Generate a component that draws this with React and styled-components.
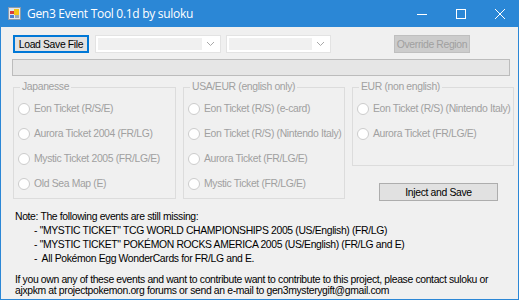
import React from 'react'
import styled, { createGlobalStyle } from 'styled-components';

const GlobalStyle = createGlobalStyle`
html, body {
    margin: 0;
    padding: 0;
    background: #ffffff;
}
* {
    box-sizing: border-box;
}
`

const Window = styled.div`
width: 519px;
height: 300px;
display: flex;
flex-direction: column;
border: 1px solid #2b87d6;
border-top: none;
background: #f0f0f0;
font-family: "Liberation Sans", Arial, sans-serif;
font-size: 10.4px;
letter-spacing: -0.35px;
color: #000;
overflow: hidden;
`

const TitleBar = styled.div`
height: 27px;
display: flex;
align-items: center;
background: #2b87d6;
color: #fff;
margin: 0 -1px;
padding-left: 8px;
letter-spacing: normal;
.title-text {
    margin-left: 6px;
    font-family: "Open Sans", "Noto Sans", sans-serif;
    font-size: 12px;
    letter-spacing: -0.3px;
}
`

const Controls = styled.div`
margin-left: auto;
display: flex;
height: 100%;
`

const CtrlButton = styled.div`
width: 39px;
height: 100%;
display: flex;
align-items: center;
justify-content: center;
`

const Body = styled.div`
flex: 1;
display: flex;
flex-direction: column;
padding: 8px 8px 0 11px;
`

const TopRow = styled.div`
display: flex;
align-items: center;
height: 18px;
padding-left: 1px;
`

const Button = styled.div`
height: ${p => p.h || 18}px;
width: ${p => p.w}px;
display: flex;
align-items: center;
justify-content: center;
border: 1px solid ${p => p.focused ? '#0078d7' : p.disabled ? '#bfbfbf' : '#adadad'};
box-shadow: ${p => p.focused ? 'inset 0 0 0 1px #0078d7' : 'none'};
background: ${p => p.disabled ? '#cccccc' : '#e1e1e1'};
color: ${p => p.disabled ? '#a0a0a0' : '#000'};
white-space: nowrap;
margin-left: ${p => p.ml || 0}px;
margin-top: ${p => p.mt || 0}px;
`

const Combo = styled.div`
width: ${p => p.w}px;
height: 18px;
margin-left: ${p => p.ml}px;
border: 1px solid #e3e3e3;
background: #fff;
display: flex;
align-items: center;
padding: 2px;
.combo-field {
    flex: 1;
    height: 100%;
    background: #f0f0f0;
}
.combo-arrow {
    width: 16px;
    display: flex;
    justify-content: center;
}
`

const Progress = styled.div`
margin-top: 6px;
width: 498px;
height: 17px;
border: 1px solid #bcbcbc;
background: #e6e6e6;
`

const Groups = styled.div`
display: flex;
align-items: flex-start;
margin-top: 5px;
padding-left: 1px;
`

const Column = styled.div`
display: flex;
flex-direction: column;
margin-left: ${p => p.ml || 0}px;
`

const Group = styled.fieldset`
width: ${p => p.w}px;
height: ${p => p.h}px;
margin: 0;
padding: 3px 0 0 4px;
border: 1px solid #dcdcdc;
legend {
    margin-left: 2px;
    padding: 0 2px;
    color: #a0a0a0;
    line-height: 12px;
}
`

const Radio = styled.div`
height: 25px;
display: flex;
align-items: center;
color: #a0a0a0;
white-space: nowrap;
.radio-dot {
    width: 12px;
    height: 12px;
    border-radius: 50%;
    border: 1px solid #cccccc;
    background: #fff;
    margin-right: 4px;
    flex-shrink: 0;
}
`

const Note = styled.div`
margin-top: 9px;
padding-left: 3px;
line-height: 14px;
.bullet {
    padding-left: 19px;
    white-space: pre;
}
`

const Contact = styled.div`
margin-top: 8px;
padding-left: 3px;
line-height: 11px;
white-space: nowrap;
`

const AppIcon = () => (
    <svg width="13" height="13" viewBox="0 0 13 13">
        <rect x="0.5" y="0.5" width="12" height="12" fill="#dfe6ee" stroke="#8c9aab" />
        <rect x="2" y="4" width="4" height="3" fill="#d83b3b" />
        <rect x="2" y="8" width="4" height="3" fill="#4a7fd0" />
        <rect x="6" y="2" width="5" height="6" fill="#f5c518" />
        <rect x="7" y="8" width="4" height="3" fill="#9aa8b8" />
    </svg>
)

const Chevron = () => (
    <svg width="9" height="6" viewBox="0 0 9 6">
        <path d="M1 1 L4.5 4.5 L8 1" fill="none" stroke="#a8a8a8" strokeWidth="1" />
    </svg>
)

const groups = [
    { name: 'Japanesse', w: 163, h: 118, items: ['Eon Ticket (R/S/E)', 'Aurora Ticket 2004 (FR/LG)', 'Mystic Ticket 2005 (FR/LG/E)', 'Old Sea Map (E)'] },
    { name: 'USA/EUR (english only)', w: 162, h: 118, items: ['Eon Ticket (R/S) (e-card)', 'Eon Ticket (R/S) (Nintendo Italy)', 'Aurora Ticket (FR/LG/E)', 'Mystic Ticket (FR/LG/E)'] },
]

const eur = { name: 'EUR (non english)', w: 162, h: 85, items: ['Eon Ticket (R/S) (Nintendo Italy)', 'Aurora Ticket (FR/LG/E)'] }

const GroupBox = ({ name, w, h, items }) => (
    <Group w={w} h={h}>
        <legend>{name}</legend>
        {items.map(it => (
            <Radio key={it}>
                <span className='radio-dot' />
                {it}
            </Radio>
        ))}
    </Group>
)

const App = () => {
    return (
        <>
            <GlobalStyle />
            <Window>
                <TitleBar>
                    <AppIcon />
                    <span className='title-text'>Gen3 Event Tool 0.1d by suloku</span>
                    <Controls>
                        <CtrlButton>
                            <svg width="10" height="10" viewBox="0 0 10 10"><path d="M0 5.5 H10" stroke="#fff" /></svg>
                        </CtrlButton>
                        <CtrlButton>
                            <svg width="10" height="10" viewBox="0 0 10 10"><rect x="0.5" y="0.5" width="9" height="9" fill="none" stroke="#fff" /></svg>
                        </CtrlButton>
                        <CtrlButton>
                            <svg width="10" height="10" viewBox="0 0 10 10"><path d="M0 0 L10 10 M10 0 L0 10" stroke="#fff" /></svg>
                        </CtrlButton>
                    </Controls>
                </TitleBar>
                <Body>
                    <TopRow>
                        <Button w={76} focused>Load Save File</Button>
                        <Combo w={126} ml={6}>
                            <div className='combo-field' />
                            <div className='combo-arrow'><Chevron /></div>
                        </Combo>
                        <Combo w={105} ml={5}>
                            <div className='combo-field' />
                            <div className='combo-arrow'><Chevron /></div>
                        </Combo>
                        <Button w={76} ml={63} disabled>Override Region</Button>
                    </TopRow>
                    <Progress />
                    <Groups>
                        {groups.map((g, i) => (
                            <Column key={g.name} ml={i ? 7 : 0}>
                                <GroupBox {...g} />
                            </Column>
                        ))}
                        <Column ml={7}>
                            <GroupBox {...eur} />
                            <Button w={119} ml={27} mt={17}>Inject and Save</Button>
                        </Column>
                    </Groups>
                    <Note>
                        <div>Note: The following events are still missing:</div>
                        <div className='bullet'>- "MYSTIC TICKET" TCG WORLD CHAMPIONSHIPS 2005 (US/English) (FR/LG)</div>
                        <div className='bullet'>- "MYSTIC TICKET" POKÉMON ROCKS AMERICA 2005 (US/English) (FR/LG and E)</div>
                        <div className='bullet'>-  All Pokémon Egg WonderCards for FR/LG and E.</div>
                    </Note>
                    <Contact>
                        If you own any of these events and want to contribute want to contribute to this project, please contact suloku or<br />
                        ajxpkm at projectpokemon.org forums or send an e-mail to gen3mysterygift@gmail.com
                    </Contact>
                </Body>
            </Window>
        </>
    )
}

export default App;
